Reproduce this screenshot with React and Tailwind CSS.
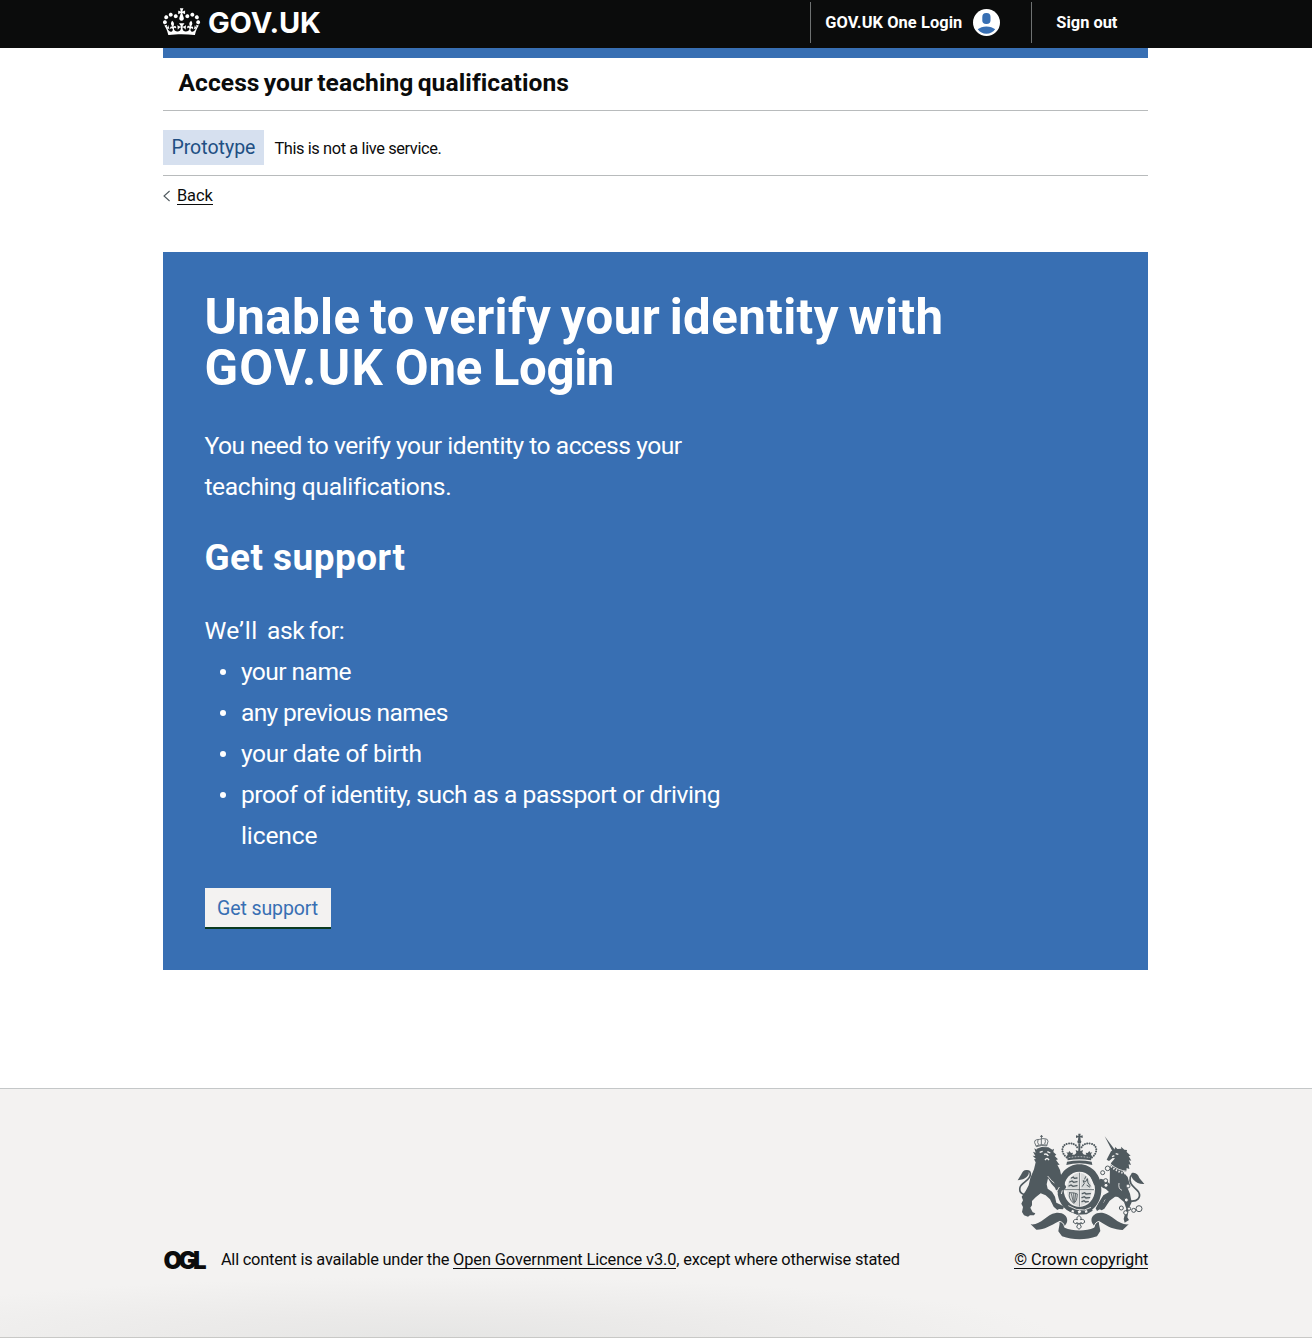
const CROWN =
  "M6.7 12.2c1 .4 2.1-.1 2.5-1s-.1-2.1-1-2.5c-1-.4-2.1.1-2.5 1-.4 1 0 2.1 1 2.5m-4.3 2.5c1 .4 2.1-.1 2.5-1s-.1-2.1-1-2.5c-1-.4-2.1.1-2.5 1-.5 1 0 2.1 1 2.5m-1.3 4.8c1 .4 2.1-.1 2.5-1s-.1-2.1-1-2.5c-1-.4-2.1.1-2.5 1-.4 1 0 2.1 1 2.5m10.4-5.8c1 .4 2.1-.1 2.5-1s-.1-2.1-1-2.5c-1-.4-2.1.1-2.5 1s0 2.1 1 2.5m17.4-1.5c-1 .4-2.1-.1-2.5-1s.1-2.1 1-2.5c1-.4 2.1.1 2.5 1 .5 1 0 2.1-1 2.5m4.3 2.5c-1 .4-2.1-.1-2.5-1s.1-2.1 1-2.5c1-.4 2.1.1 2.5 1 .5 1 0 2.1-1 2.5m1.3 4.8c-1 .4-2.1-.1-2.5-1s.1-2.1 1-2.5c1-.4 2.1.1 2.5 1 .4 1 0 2.1-1 2.5m-10.4-5.8c-1 .4-2.1-.1-2.5-1s.1-2.1 1-2.5c1-.4 2.1.1 2.5 1s0 2.1-1 2.5m-5.3-4.9 2.4 1.3V6.5l-2.4.8c-.1-.1-.1-.1-.2-.1s1-3 1-3h-3.4s1 3 1 3c-.1.1-.2.1-.2.1-.1.1-2.4-.7-2.4-.7v3.5L17 8.8c-.1.1 0 .2.1.3l-1.4 4.2c-.1.2-.1.4-.1.7 0 1.1.8 2.1 1.9 2.2h.6C19.2 16 20 15 20 14c0-.2 0-.4-.1-.7l-1.4-4.2c.2-.1.3-.2.3-.3m-1 20.3c4.6 0 8.9.3 12.8.9 1.1-4.6 2.4-7.2 3.8-9.1l-2.6-.9c.3 1.3.3 1.9 0 2.8-.4-.4-.8-1.2-1.1-2.4l-1.2 4.2c.8-.5 1.3-.9 2-.9-1.2 2.6-2.7 3.2-3.6 3-1.2-.2-1.7-1.3-1.5-2.2.3-1.3 1.6-1.6 2.2-.1 1.2-2.4-.8-3.1-2.1-2.4 1.9-1.9 2.2-3.6.6-5.7-2.2 1.7-2.2 3.3-1.2 5.6-1.3-1.5-3.3-.7-2.5 1.7.9-1.4 2.1-.5 2 .8-.2 1.2-1.7 2.2-3.7 2.1-2.8-.2-3-2.2-3-3.7.7-.1 1.9.5 3 2l.4-4.4c-1.1 1.2-2.3 1.4-3.5 1.4.4-1.2 2.1-3.1 2.1-3.1h-5.5s1.8 1.9 2.1 3.1c-1.1 0-2.3-.3-3.5-1.4l.4 4.4c1.1-1.5 2.3-2.1 3-2-.1 1.6-.2 3.5-3 3.7-1.9.2-3.5-.9-3.7-2.1-.2-1.3 1-2.2 2-.8.7-2.4-1.3-3.1-2.6-1.7 1-2.3 1-3.9-1.2-5.6-1.6 2.1-1.3 3.8.6 5.7-1.3-.7-3.2 0-2.1 2.4.6-1.5 1.9-1.1 2.2.1.2.9-.4 1.9-1.5 2.2-1 .2-2.5-.5-3.6-3 .7 0 1.3.4 2 .9L5 20.4c-.3 1.2-.7 2-1.1 2.4-.3-.9-.2-1.5 0-2.8l-2.6.9C2.7 22.8 4 25.4 5.1 30c3.8-.5 8.2-.9 12.7-.9";

function CrownLogo() {
  return (
    <svg viewBox="0 4 36 26.2" className="h-[27.3px] w-[37.5px]" fill="#fff" aria-hidden="true">
      <path d={CROWN} />
    </svg>
  );
}

function AccountIcon() {
  return (
    <svg viewBox="0 0 27 27" className="h-[27px] w-[27px]" aria-hidden="true">
      <circle cx="13.5" cy="13.5" r="13.5" fill="#fff" />
      <rect x="9.3" y="4.1" width="8.2" height="11" rx="3.8" fill="#386fb3" />
      <path d="M4.7 20.3Q8 17.4 13.4 17.4T22.2 20.3Q18.8 24.7 13.4 24.7T4.7 20.3Z" fill="#386fb3" />
    </svg>
  );
}

function RoyalArms() {
  return (
    <svg viewBox="40 28 384 320" className="h-[106.7px] w-[128px]" fill="#505a5f" stroke="none" aria-hidden="true">
      {/* imperial crown */}
      <path d="M224 30h7l-1 7 7-2v8l-7-2 1 8h-8l1-8-7 2v-8l7 2z" />
      <circle cx="227" cy="54" r="6" />
      <g fill="none" stroke="#505a5f" strokeWidth="6" strokeLinecap="round" strokeDasharray="0.1 7">
        <path d="M189 101C171 88 172 64 192 60C206 57 218 63 221 72" />
        <path d="M265 101C283 88 282 64 262 60C248 57 236 63 233 72" />
      </g>
      <path d="M224 60h6v28h-6zM226 76l5 6 7-3-2 8 5 7h-28l5-7-2-8 7 3zM197 82l5 6 6-1-2 6 4 6h-20l2-8-4-5 6 1zM257 82l-5 6-6-1 2 6-4 6h20l-2-8 4-5-6 1z" />
      <path d="M189 96q38-9 76 0l-3 14q-35-7-70 0z" />
      <path d="M190 114q37-7 74 0l2 10q-39-10-78 0z" />
      <path d="M195 102q32-6 64 0" fill="none" stroke="#f3f2f1" strokeWidth="2" strokeDasharray="5 4" />

      {/* garter and shield */}
      <path fillRule="evenodd" d="M227 122c38 0 66 32 66 75s-28 74-66 74-66-31-66-74 28-75 66-75zm0 22c-26 0-47 23-47 53s21 53 47 53 47-23 47-53-21-53-47-53z" />
      <path d="M184 198h87M227 147v102" stroke="#505a5f" strokeWidth="2.5" />
      <path d="M190 195c1-23 13-42 33-47v47zM231 148c20 5 32 24 33 47h-33zM190 203h33v44c-19-4-31-21-33-44zM231 203h33c-2 23-14 40-33 44z" fill="#d8dada" />
      <g fill="none" stroke="#505a5f" strokeWidth="4" strokeLinecap="round">
        <path d="M203 163l6-3 3 4 8-1M198 175l7-3 5 4 10-2M196 187l6-3 6 4 12-2" />
        <path d="M236 188l6-9-4-8 8 3 5-9 2 13 7 9M243 166l3-7M250 185l8 5" strokeWidth="3" />
        <path d="M236 210l7-3 4 4 13-1M235 222l7-3 5 4 11-1M235 234l6-3 5 4 8-1" />
        <path d="M198 207q-6 16 12 32 10-5 11-28-9-5-23-4zM203 210l6 25M210 209l1 26M216 210l-3 24" strokeWidth="2.5" />
      </g>

      {/* lion */}
      <g stroke="#505a5f" strokeWidth="2.5">
        <path d="M98 69l-5-12q-2-7 6-9l9-1 6-2 9 0q10 0 10 8l-4 14q-16-4-31 2z" fill="#f3f2f1" />
        <path d="M98 66q15-5 31-2M113 46v17M103 49q-3 7 2 14M124 47q3 7-1 14" fill="none" />
        <path d="M109 38h9M113.500 34v11" fill="none" />
      </g>
      <path d="M99 75l15-5 20 1 12 7 5-3-2 10 9 8-5 4 10 10-6 2 11 15-7-1 8 16 3 14 12 18-1 11 5 8-6 10-8-2-5 7-6-6-6 1-3-8-11-12-10-16-4 18 3 13 13 9 9 15 4 18 13 6 10 6-3 8-12-1-5 3-11-10-11-22-13-12-15-6-15 12-11 11 0 13-5 7 7 14 8 3-4 6-12 0-6 4-12-4-6-10 3-15-5-10 5-10-4-11 12-17 9-17 5-22 11-26 5-21-5-9 6-1-10-10 8 1-7-13 8 3-4-13 7 4z" />
      <path d="M108 86l9-3M131 84l9 4M121 92q8-4 13 5M124 109q6-9 12 0" fill="none" stroke="#f3f2f1" strokeWidth="4" />
      <path d="M167 190l-8 14M176 200l-3 11M149 207l14 1M132 157q12 16 20 21" fill="none" stroke="#f3f2f1" strokeWidth="2.5" />
      <path d="M78 215C57 217 45 206 49 191C53 176 82 171 80 149C78 139 69 141 66 151" fill="none" stroke="#505a5f" strokeWidth="5" />
      <path d="M73 140c-10-4-17 4-20 12l-11 18c13-2 20-4 27-10 8-7 8-14 4-20z" />

      {/* unicorn */}
      <path d="M303 38l31 41-7 5z" />
      <path d="M322 83l10-5 3-8 6 6 12-1-1-6 10 9 8 1-1 6 12 11-6 1 8 14-7-1 6 14-7-2 2 14-8-3-1 11-10-2-3 9-12-14-22-7 1-12 12-14-7-1-11 9-7-4 4-8z" />
      <path d="M319 128l35 12 18 20 6 22-6 12 7 16 5 26-8 17-5 28 5 8-13 8-3-11 8-31-7-20-18-15-24-4-17 14-8 23-14 9-4-8 9-17 14-22 17-10-19-18-14 7-12-11-7-16-8-16-2-12 15 6-2 12 12 18 12-10 16 5 11 10z" />
      <path d="M312 190l-14-13-9 7 9 9 10 3z" />
      <path d="M340 215l-22 16-16 24-8 5-14-7 5-9 15-7 13-25z" />
      <path d="M336 90l8 2M325 99l7-3" stroke="#f3f2f1" strokeWidth="4" fill="none" />
      <path d="M322 122q20 18 48 21M346 178q-3 18 9 22" stroke="#f3f2f1" strokeWidth="2.5" fill="none" />
      <path d="M322 128q19 17 42 21" stroke="#f3f2f1" strokeWidth="6" strokeDasharray="4 5" fill="none" />
      <path d="M379 232C401 235 414 221 404 204C394 190 374 184 380 160C384 149 394 151 398 161" fill="none" stroke="#505a5f" strokeWidth="5" />
      <path d="M384 148c12-3 19 4 23 15l15 18c-14 1-24-3-31-11-9-10-10-16-7-22z" />
      <g fill="#f3f2f1" stroke="#505a5f" strokeWidth="3">
        <circle cx="312" cy="134" r="7" /><circle cx="297" cy="147" r="6" /><circle cx="306" cy="171" r="6" /><circle cx="307" cy="185" r="6" />
        <circle cx="373" cy="187" r="6" /><circle cx="368" cy="229" r="6" /><circle cx="353" cy="253" r="6" /><circle cx="366" cy="267" r="6" />
        <circle cx="376" cy="255" r="5" /><circle cx="390" cy="260" r="6" /><circle cx="406" cy="255" r="9" />
      </g>

      {/* buckle, motto ribbon and pendant */}
      <path d="M195 244l23 11 26 2 18-7 5 11-18 11-29 1-26-12z" />
      <path d="M194 246l24 11 24 2 20-8" fill="none" stroke="#f3f2f1" strokeWidth="2.5" />
      <path d="M205 258l7 3-3 6-6-3zM222 263l7-4 4 6-8 5zM243 261l7-2 2 7-7 2z" fill="#f3f2f1" />
      <path d="M81 302C111 306 128 272 156 268C179 265 194 279 190 295C188 303 181 306 183 312C207 323 248 323 271 312C274 305 266 302 264 294C260 278 276 264 299 268C326 273 343 305 375 302L357 319C333 319 310 308 291 295C281 291 288 306 290 322L280 338C247 350 208 350 175 338L164 323C166 307 172 292 163 294C143 305 119 319 98 318Z" />
      <path d="M166 293q14 1 17 18M288 293q-14 1-17 18" fill="none" stroke="#f3f2f1" strokeWidth="3" />
      <path d="M226 275l7 8-3 5q13-4 13 8l-8 5-3-5-2 7 3 7-7 7-7-7 3-7-2-7-3 5-8-5q0-12 13-8l-3-5z" fill="#f3f2f1" stroke="#505a5f" strokeWidth="3" />
      <circle cx="226" cy="300" r="3" />
    </svg>
  );
}

function Header() {
  return (
    <header className="h-12 bg-[#0b0c0c] text-white">
      <div className="ml-[163.4px] flex h-full w-[985px] items-start">
        <a className="flex items-start gap-[7px] pt-[8px]">
          <CrownLogo />
          <span className="font-['Inter',sans-serif] text-[29px] leading-[30px] font-bold tracking-[-0.1px]">GOV.UK</span>
        </a>
        <nav className="ml-auto flex pt-[2px] pr-[31px] text-[16.4px] leading-[41px] font-bold">
          <div className="flex h-[41px] w-[220.5px] items-center border-l border-[#6f7272] pl-[14px]">
            <span className="tracking-[0.08px]">GOV.UK One Login</span>
            <span className="ml-[10.5px]"><AccountIcon /></span>
          </div>
          <div className="h-[41px] border-l border-[#6f7272] pl-[24.5px]">Sign out</div>
        </nav>
      </div>
    </header>
  );
}

const BULLETS = [
  { text: "your name", track: "tracking-[-0.56px]" },
  { text: "any previous names", track: "tracking-[-0.62px]" },
  { text: "your date of birth", track: "tracking-[-0.34px]" },
  { text: "proof of identity, such as a passport or driving", rest: "licence", track: "tracking-[-0.41px]" },
];

function ErrorPanel() {
  return (
    <main className="mt-[42px] h-[718px] bg-[#386fb3] pt-[39.5px] pl-[41px] text-white">
      <h1 className="text-[49.2px] leading-[51.3px] font-bold whitespace-nowrap">
        <span className="tracking-[0.4px] [word-spacing:-3px]">Unable to verify your identity with</span>
        <br />
        <span className="tracking-[1.3px]">GOV.UK</span>
        <span className="tracking-[-0.35px] [word-spacing:-1px]"> One Login</span>
      </h1>
      <p className="mt-[30.5px] text-[24.6px] leading-[41px]">
        <span className="block tracking-[-0.47px]">You need to verify your identity to access your</span>
        <span className="block tracking-[-0.33px]">teaching qualifications.</span>
      </p>
      <h2 className="mt-[30.5px] text-[36.9px] leading-[41px] font-bold tracking-[0.5px]">Get support</h2>
      <p className="mt-[32px] text-[24.6px] leading-[41px] whitespace-pre">
        <span className="tracking-[0.5px]">We’ll</span>
        <span className="tracking-[-0.42px] [word-spacing:-1px]">{"  ask for:"}</span>
      </p>
      <ul className="text-[24.6px] leading-[41px]">
        {BULLETS.map((b) => (
          <li key={b.text} className="flex">
            <span className="flex h-[41px] w-[36.5px] shrink-0 items-center pl-[15.5px]">
              <span className="h-[6px] w-[6px] rounded-full bg-white" />
            </span>
            <span>
              <span className={`block ${b.track}`}>{b.text}</span>
              {b.rest && <span className="block tracking-[-0.1px]">{b.rest}</span>}
            </span>
          </li>
        ))}
      </ul>
      <button className="mt-[32px] ml-[0.2px] h-[41px] w-[126px] border-b-2 border-[#0b3a20] bg-[#f3f2f1] pt-[2px] text-[19.5px] leading-[37px] tracking-[-0.1px] text-[#386fb3]">
        Get support
      </button>
    </main>
  );
}

function Footer() {
  return (
    <footer className="mt-[118px] flex h-[250px] flex-col border-t border-b border-t-[#c4c7c8] border-b-[#c8c8c6] bg-[#f3f2f1] bg-[radial-gradient(ellipse_620px_60px_at_440px_100%,#e6e6e5_0%,#ebeae9_40%,#f3f2f1_100%)]">
      <div className="ml-[163.4px] flex w-[985px] items-end justify-between pt-[44px] text-[16.4px] leading-[20px]">
        <div className="flex items-end whitespace-pre">
          <span className="-mb-[2px] w-[57.5px] font-['Inter',sans-serif] text-[24px] leading-[20px] font-black tracking-[-3.6px]">OGL</span>
          <span className="-mb-px tracking-[-0.22px]">{"All content is available under the "}</span>
          <a className="border-b border-[#0b0c0c] pt-[2px] leading-[17px] tracking-[-0.12px]">Open Government Licence v3.0</a>
          <span className="-mb-px tracking-[-0.2px]">, except where otherwise stated</span>
        </div>
        <div className="flex flex-col items-end">
          <span className="mr-[3px]"><RoyalArms /></span>
          <a className="mt-[9px] border-b border-[#0b0c0c] pt-[2px] leading-[17px] tracking-[-0.1px]">© Crown copyright</a>
        </div>
      </div>
    </footer>
  );
}

export default function App() {
  return (
    <div className="h-[1338px] w-[1312px] overflow-hidden bg-white font-['Roboto',sans-serif] text-[#0b0c0c]">
      <Header />
      <div className="ml-[163.4px] w-[985px]">
        <div className="h-[63px] border-t-10 border-b border-t-[#386fb3] border-b-[#b8bbbc] pl-[15px] text-[24.6px] leading-[50px] font-bold tracking-[0.08px] [word-spacing:-2px]">
          Access your teaching qualifications
        </div>
        <div className="flex h-[65px] items-start border-b border-[#b8bbbc] pt-[19px]">
          <strong className="h-[35px] w-[100.5px] bg-[#d6e0ef] pl-[8px] text-[19.5px] leading-[36px] font-normal text-[#214f83]">Prototype</strong>
          <span className="ml-[10.5px] text-[16.4px] leading-[38px] tracking-[-0.39px]">This is not a live service.</span>
        </div>
        <div className="mt-[9px] flex h-[25px] items-start">
          <svg viewBox="0 0 8 12" className="mt-[5px] h-3 w-2" fill="none" stroke="#505a5f" strokeWidth="1.1" aria-hidden="true">
            <path d="M6.6 1 1 6l5.6 5" />
          </svg>
          <a className="ml-[5.5px] border-b border-[#0b0c0c] pt-[3px] text-[16.4px] leading-[16px]">Back</a>
        </div>
        <ErrorPanel />
      </div>
      <Footer />
    </div>
  );
}
